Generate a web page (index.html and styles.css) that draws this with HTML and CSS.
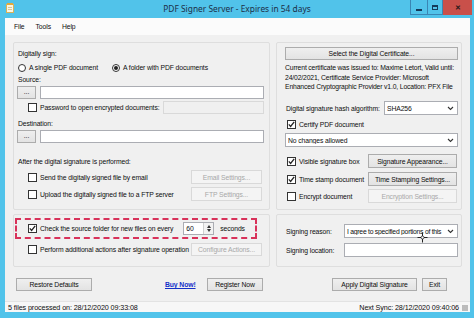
FILE: index.html
```html
<!DOCTYPE html>
<html>
<head>
<meta charset="utf-8">
<link rel="stylesheet" href="styles.css">
</head>
<body>
<div class="window">
  <div class="titlebar">
    <div class="tb-left">
      <svg class="app-icon" width="8" height="10" viewBox="0 0 8 10"><rect x="0.5" y="1.5" width="7" height="8" fill="#fbf6e4" stroke="#d8b25a"/><rect x="1" y="0" width="6" height="2" fill="#e2a93c"/><line x1="2" y1="4.5" x2="6" y2="4.5" stroke="#c9b27a" stroke-width="0.7"/><line x1="2" y1="6.5" x2="6" y2="6.5" stroke="#c9b27a" stroke-width="0.7"/></svg>
    </div>
    <div class="title">PDF Signer Server - Expires in 54 days</div>
    <div class="controls">
      <div class="ctl ctl-min"><span class="min-bar"></span></div>
      <div class="ctl ctl-max"><span class="max-box"></span></div>
      <div class="ctl ctl-close">✕</div>
    </div>
  </div>
  <div class="client">
    <div class="menubar"><span>File</span><span>Tools</span><span>Help</span></div>
    <div class="main">
      <div class="groups">
        <div class="group g-sign">
          <div class="lbl mt5">Digitally sign:</div>
          <div class="row h13 mt2">
            <span class="radio-opt w94"><span class="radio"></span><span>A single PDF document</span></span>
            <span class="radio-opt"><span class="radio checked"></span><span>A folder with PDF documents</span></span>
          </div>
          <div class="lbl mt0">Source:</div>
          <div class="row h13 mt1">
            <span class="btn btn-dots">...</span>
            <span class="input grow ml4"></span>
          </div>
          <div class="row h13 mt2 indent">
            <span class="cb"></span><span class="cb-label">Password to open encrypted documents:</span>
            <span class="input disabled w101 mlauto"></span>
          </div>
          <div class="lbl mt4">Destination:</div>
          <div class="row h13 mt1">
            <span class="btn btn-dots">...</span>
            <span class="input grow ml4"></span>
          </div>
          <div class="lbl mt13">After the digital signature is performed:</div>
          <div class="row h14 mt3 indent">
            <span class="cb"></span><span class="cb-label">Send the digitally signed file by email</span>
            <span class="btn disabled w71 mlauto mr2">Email Settings...</span>
          </div>
          <div class="row h14 mt3 indent">
            <span class="cb"></span><span class="cb-label">Upload the digitally signed file to a FTP server</span>
            <span class="btn disabled w71 mlauto mr2">FTP Settings...</span>
          </div>
        </div>

        <div class="group g-cert">
          <div class="row h13 mt4"><span class="btn grow">Select the Digital Certificate...</span></div>
          <div class="cert-text">Current certificate was issued to: Maxime Letort, Valid until:<br>24/02/2021, Certificate Service Provider: Microsoft<br>Enhanced Cryptographic Provider v1.0, Location: PFX File</div>
          <div class="row h14 mt9">
            <span class="lbl-inline pl1">Digital signature hash algorithm:</span>
            <span class="select w74 mlauto"><span>SHA256</span><svg class="chev" width="7" height="5" viewBox="0 0 7 5"><path d="M1 1 L3.5 3.5 L6 1" fill="none" stroke="#333" stroke-width="1.1"/></svg></span>
          </div>
          <div class="row h12 mt3 pl2">
            <span class="cb checked"><svg width="9" height="9" viewBox="0 0 9 9"><path d="M1.8 4.4 L3.6 6.4 L7.2 1.8" fill="none" stroke="#222" stroke-width="1.3"/></svg></span><span class="cb-label">Certify PDF document</span>
          </div>
          <div class="row h14 mt3">
            <span class="select grow"><span>No changes allowed</span><svg class="chev" width="7" height="5" viewBox="0 0 7 5"><path d="M1 1 L3.5 3.5 L6 1" fill="none" stroke="#333" stroke-width="1.1"/></svg></span>
          </div>
          <div class="row h14 mt7 pl2">
            <span class="cb checked"><svg width="9" height="9" viewBox="0 0 9 9"><path d="M1.8 4.4 L3.6 6.4 L7.2 1.8" fill="none" stroke="#222" stroke-width="1.3"/></svg></span><span class="cb-label">Visible signature box</span>
            <span class="btn w89 mlauto mr1">Signature Appearance...</span>
          </div>
          <div class="row h14 mt4 pl2">
            <span class="cb checked"><svg width="9" height="9" viewBox="0 0 9 9"><path d="M1.8 4.4 L3.6 6.4 L7.2 1.8" fill="none" stroke="#222" stroke-width="1.3"/></svg></span><span class="cb-label">Time stamp document</span>
            <span class="btn w89 mlauto mr1">Time Stamping Settings...</span>
          </div>
          <div class="row h14 mt3 pl2">
            <span class="cb"></span><span class="cb-label">Encrypt document</span>
            <span class="btn disabled w89 mlauto mr1">Encryption Settings...</span>
          </div>
        </div>

        <div class="group g-watch">
          <div class="watch-box">
            <span class="cb checked"><svg width="9" height="9" viewBox="0 0 9 9"><path d="M1.8 4.4 L3.6 6.4 L7.2 1.8" fill="none" stroke="#222" stroke-width="1.3"/></svg></span><span class="cb-label">Check the source folder for new files on every</span>
            <span class="numeric"><span class="num-val">60</span><span class="spin"><span class="tri-up"></span><span class="tri-down"></span></span></span>
            <span class="seconds">seconds</span>
          </div>
          <div class="row h13 mt4 indent">
            <span class="cb"></span><span class="cb-label">Perform additional actions after signature operation</span>
            <span class="btn disabled w71 mlauto mr2">Configure Actions...</span>
          </div>
        </div>

        <div class="group g-reason">
          <div class="row h14 mt9">
            <span class="lbl-inline pl1">Signing reason:</span>
            <span class="select w114 mlauto"><span class="tight">I agree to specified portions of this</span><svg class="chev" width="7" height="5" viewBox="0 0 7 5"><path d="M1 1 L3.5 3.5 L6 1" fill="none" stroke="#333" stroke-width="1.1"/></svg></span>
          </div>
          <div class="row h14 mt5">
            <span class="lbl-inline pl1">Signing location:</span>
            <span class="input w114 mlauto"></span>
          </div>
        </div>
      </div>

      <div class="actions">
        <span class="btn w76 ml3">Restore Defaults</span>
        <a class="buy" href="#">Buy Now!</a>
        <span class="btn w56 register">Register Now</span>
        <span class="btn w85 apply">Apply Digital Signature</span>
        <span class="btn w25 ml5">Exit</span>
      </div>
      <svg class="cursor" width="11" height="11" viewBox="0 0 11 11"><path d="M5.5 0.5 V10.5 M0.5 5.5 H10.5" stroke="#222" stroke-width="1"/><circle cx="5.5" cy="5.5" r="1.5" fill="#fff" stroke="#222" stroke-width="0.8"/></svg>
    </div>
    <div class="status">
      <span>5 files processed on: 28/12/2020 09:33:08</span>
      <span class="status-right">Next Sync: 28/12/2020 09:40:06</span>
      <span class="grip"></span>
    </div>
  </div>
</div>
</body>
</html>
```
FILE: styles.css
```css
* { box-sizing: border-box; }
html, body { margin: 0; padding: 0; }
body {
  width: 474px;
  height: 318px;
  overflow: hidden;
  font-family: "Liberation Sans", Arial, sans-serif;
  font-size: 6.8px;
  letter-spacing: -0.1px;
  color: #0d0d0d;
}
.window {
  width: 474px;
  height: 318px;
  background: #51c3ea;
  display: flex;
  flex-direction: column;
}
.titlebar {
  height: 18px;
  display: grid;
  grid-template-columns: 1fr auto 1fr;
  align-items: start;
}
.tb-left { padding: 3px 0 0 6px; }
.app-icon { display: block; }
.title {
  font-family: "Noto Sans", "Open Sans", sans-serif;
  font-size: 8.4px;
  letter-spacing: 0;
  color: #1c2f48;
  line-height: 18px;
}
.controls {
  justify-self: end;
  display: flex;
  height: 15px;
  margin-right: 2px;
}
.ctl {
  height: 15px;
  display: flex;
  align-items: center;
  justify-content: center;
}
.ctl-min { width: 17px; border: 1px solid #3a86b4; border-top: 0; border-right: 0; }
.ctl-max { width: 16px; border: 1px solid #3a86b4; border-top: 0; }
.ctl-close {
  width: 29px;
  background: #c9504a;
  color: #2a1a1a;
  font-size: 7px;
  font-weight: bold;
}
.min-bar { width: 6px; height: 2px; background: #143a5a; margin-top: 5px; }
.max-box { width: 6px; height: 5px; border: 1px solid #143a5a; border-top-width: 2px; }

.client {
  flex: 1;
  margin: 0 4px 6px 5px;
  background: #f0f0f0;
  display: flex;
  flex-direction: column;
  position: relative;
}
.menubar {
  height: 17px;
  background: #fbfbfb;
  display: flex;
  align-items: center;
  gap: 11px;
  padding-left: 9px;
  padding-bottom: 1px;
}
.main {
  height: 266px;
  padding: 7px 7px 0 8px;
}
.groups {
  display: grid;
  grid-template-columns: 257px 186px;
  grid-template-rows: 168px 53px;
  column-gap: 6px;
  row-gap: 4px;
}
.group {
  border: 1px solid #dedede;
  border-radius: 2px;
  display: flex;
  flex-direction: column;
}
.g-sign { padding: 0 5px 0 4px; }
.g-cert { padding: 0 3px 0 8px; }
.g-watch { padding: 0 5px 0 4px; }
.g-reason { padding: 0 3px 0 8px; }

.lbl { height: 11px; line-height: 11px; white-space: nowrap; }
.lbl-inline { white-space: nowrap; }
.row { display: flex; align-items: center; white-space: nowrap; }
.h12 { height: 12px; }
.h13 { height: 13px; }
.h14 { height: 14px; }
.mt0 { margin-top: 0; }
.mt1 { margin-top: 1px; }
.mt2 { margin-top: 2px; }
.mt3 { margin-top: 3px; }
.mt4 { margin-top: 4px; }
.mt5 { margin-top: 5px; }
.mt7 { margin-top: 7px; }
.mt9 { margin-top: 9px; }
.mt13 { margin-top: 13px; }
.ml3 { margin-left: 3px; }
.ml4 { margin-left: 4px; }
.ml5 { margin-left: 5px; }
.mr1 { margin-right: 1px; }
.mr2 { margin-right: 2px; }
.mlauto { margin-left: auto; }
.pl1 { padding-left: 1px; }
.pl2 { padding-left: 2px; }
.indent { padding-left: 10px; }
.grow { flex: 1; }
.w25 { width: 25px; }
.w56 { width: 56px; }
.w71 { width: 71px; }
.w74 { width: 74px; }
.w76 { width: 76px; }
.w85 { width: 85px; }
.w89 { width: 89px; }
.w94 { width: 94px; }
.w101 { width: 101px; }
.w114 { width: 114px; }

.radio-opt { display: inline-flex; align-items: center; }
.radio {
  width: 8px; height: 8px;
  border: 1px solid #333;
  border-radius: 50%;
  background: #fff;
  margin-right: 3px;
  display: inline-flex;
  align-items: center;
  justify-content: center;
}
.radio.checked::after {
  content: "";
  width: 4px; height: 4px;
  border-radius: 50%;
  background: #222;
}
.cb {
  width: 9px; height: 9px;
  border: 1px solid #333;
  background: #fff;
  flex: none;
  display: inline-flex;
  align-items: center;
  justify-content: center;
}
.cb svg { display: block; margin: -1px; }
.cb-label { margin-left: 3px; }

.btn {
  height: 100%;
  display: inline-flex;
  align-items: center;
  justify-content: center;
  background: linear-gradient(#efefef, #e3e3e3);
  border: 1px solid #acacac;
  color: #0d0d0d;
  white-space: nowrap;
  overflow: hidden;
}
.btn.disabled {
  background: #f4f4f4;
  border-color: #d9d9d9;
  color: #a8a8a8;
}
.btn-dots { width: 19px; margin-left: -1px; padding-bottom: 2px; }
.input {
  height: 100%;
  background: #fff;
  border: 1px solid #abadb3;
}
.input.disabled { background: #f0f0f0; border-color: #d9d9d9; }
.select {
  height: 100%;
  background: #fff;
  border: 1px solid #abadb3;
  display: inline-flex;
  align-items: center;
  padding-left: 2px;
  overflow: hidden;
}
.select span { flex: 1; overflow: hidden; white-space: nowrap; }
.select .tight { letter-spacing: -0.25px; }
.chev { flex: none; margin: 0 3px 0 1px; }

.cert-text {
  margin-top: 3px;
  height: 29px;
  line-height: 9.5px;
  white-space: nowrap;
  letter-spacing: -0.15px;
}

.watch-box {
  margin: 3px 0 0 -3px;
  width: 242px;
  height: 21px;
  border: 2px dashed #d8325a;
  display: flex;
  align-items: center;
  padding-left: 11px;
  white-space: nowrap;
}
.numeric {
  margin-left: 10px;
  width: 31px;
  height: 13px;
  background: #fff;
  border: 1px solid #abadb3;
  display: flex;
}
.num-val { flex: 1; padding-left: 2px; line-height: 11px; }
.spin {
  width: 10px;
  border-left: 1px solid #cfcfcf;
  background: #f2f2f2;
  display: flex;
  flex-direction: column;
  align-items: center;
  justify-content: space-around;
  padding: 1px 0;
}
.tri-up { width: 0; height: 0; border-left: 2.5px solid transparent; border-right: 2.5px solid transparent; border-bottom: 3px solid #333; }
.tri-down { width: 0; height: 0; border-left: 2.5px solid transparent; border-right: 2.5px solid transparent; border-top: 3px solid #333; }
.seconds { margin-left: 6px; }

.actions {
  margin-top: 11px;
  height: 13px;
  display: flex;
  align-items: center;
}
.buy {
  margin-left: 73px;
  width: 42px;
  color: #1530c8;
  font-weight: bold;
  text-decoration: underline;
}
.apply { margin-left: 69px; }

.cursor { position: absolute; left: 412px; top: 214px; }

.status {
  height: 11px;
  background: #f7f7f7;
  border-top: 1px solid #e3e3e3;
  display: flex;
  align-items: center;
  padding-left: 3px;
  white-space: nowrap;
  font-size: 7.2px;
}
.status-right { margin-left: auto; }
.grip {
  width: 6px; height: 6px;
  margin: 2px 2px 0 3px;
  background-image: radial-gradient(circle, #b8b8b8 0.7px, transparent 0.8px);
  background-size: 2px 2px;
}
```
